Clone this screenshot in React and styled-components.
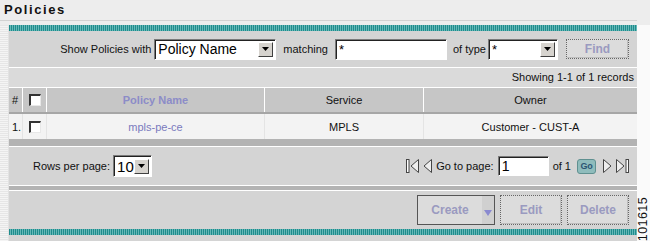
import React from "react";
import styled, { createGlobalStyle } from "styled-components";

const Global = createGlobalStyle`
  body {
    margin: 0;
    background: #f4f4f4;
    font-family: "Liberation Sans", Arial, sans-serif;
  }
`;

function Arrow() {
  return (
    <svg width="7" height="4" viewBox="0 0 7 4">
      <path d="M0 0h7L3.5 4z" fill="#000" />
    </svg>
  );
}

function PageIcon({ dir, bar }) {
  const left = dir === "left";
  const w = bar ? 13 : 9;
  return (
    <svg width={w} height="16" viewBox={`0 0 ${w} 16`}>
      {bar && left && <rect x="0.5" y="1.5" width="2.5" height="13" fill="#fff" stroke="#444" />}
      {left ? (
        <path d={bar ? "M12.5 1.5 L5 8 L12.5 14.5 Z" : "M8.5 1.5 L1 8 L8.5 14.5 Z"} fill="#eee" stroke="#444" />
      ) : (
        <path d="M0.5 1.5 L8 8 L0.5 14.5 Z" fill="#eee" stroke="#444" />
      )}
      {bar && !left && <rect x="10" y="1.5" width="2.5" height="13" fill="#fff" stroke="#444" />}
    </svg>
  );
}

export default function App() {
  return (
    <>
      <Global />
      <Page>
        <Title>Policies</Title>
        <Frame>
          <Edge />
          <Panel>
            <Teal />
            <FilterBar>
              <Label gap={3}>Show Policies with</Label>
              <Select width={122} gap={7}>
                <SelectValue size={14}>Policy Name</SelectValue>
                <SelectButton>
                  <Arrow />
                </SelectButton>
              </Select>
              <Label gap={7}>matching</Label>
              <TextInput width={112} gap={6}>*</TextInput>
              <Label gap={2}>of type</Label>
              <Select width={70} gap={8}>
                <SelectValue size={13}>*</SelectValue>
                <SelectButton>
                  <Arrow />
                </SelectButton>
              </Select>
              <DottedButton width={63} height={20}>
                Find
              </DottedButton>
            </FilterBar>
            <WhiteLine />
            <InfoRow>Showing 1-1 of 1 records</InfoRow>
            <WhiteLine />
            <Table>
              <HeaderRow>
                <HeadCell width={14} align="left">#</HeadCell>
                <HeadCell width={24}>
                  <Check />
                </HeadCell>
                <HeadCell width={218} link>
                  Policy Name
                </HeadCell>
                <HeadCell width={159}>Service</HeadCell>
                <HeadCell flex>Owner</HeadCell>
              </HeaderRow>
              <DataRow>
                <Cell width={14} align="left">1.</Cell>
                <Cell width={24}>
                  <Check />
                </Cell>
                <Cell width={218} link>
                  mpls-pe-ce
                </Cell>
                <Cell width={159}>MPLS</Cell>
                <Cell flex>Customer - CUST-A</Cell>
              </DataRow>
            </Table>
            <Band height={7} />
            <WhiteLine />
            <PagerRow>
              <RowsPer>
                <Label gap={3}>Rows per page:</Label>
                <Select width={39} height={22}>
                  <SelectValue size={15}>10</SelectValue>
                  <SelectButton>
                    <Arrow />
                  </SelectButton>
                </Select>
              </RowsPer>
              <Pager>
                <PageIcon dir="left" bar />
                <PageIcon dir="left" />
                <Label>Go to page:</Label>
                <TextInput width={51} height={20} size={14}>
                  1
                </TextInput>
                <Label>of 1</Label>
                <GoButton>Go</GoButton>
                <PageIcon dir="right" />
                <PageIcon dir="right" bar />
              </Pager>
            </PagerRow>
            <WhiteLine />
            <Band height={4} />
            <WhiteLine />
            <ButtonRow>
              <CreateButton>
                <CreateLabel>Create</CreateLabel>
                <CreateArrow>
                  <svg width="8" height="6" viewBox="0 0 8 6">
                    <path d="M0 0h8L4 6z" fill="#8a8ad0" />
                  </svg>
                </CreateArrow>
              </CreateButton>
              <DottedButton width={62} height={30}>
                Edit
              </DottedButton>
              <DottedButton width={62} height={30}>
                Delete
              </DottedButton>
            </ButtonRow>
            <Teal />
          </Panel>
          <Gutter>
            <FigId>101615</FigId>
          </Gutter>
        </Frame>
      </Page>
    </>
  );
}

const Page = styled.div`
  width: 650px;
  height: 241px;
  overflow: hidden;
  display: flex;
  flex-direction: column;
  background: #ededed;
`;

const Title = styled.div`
  height: 20px;
  padding-left: 4px;
  font-size: 13px;
  font-weight: 700;
  letter-spacing: 1.6px;
  line-height: 19px;
  color: #111;
  border-bottom: 1px solid #d2d2d2;
  margin-right: 13px;
`;

const Frame = styled.div`
  flex: 1;
  display: flex;
  padding-top: 4px;
`;

const Edge = styled.div`
  width: 8px;
  background: repeating-linear-gradient(180deg, #e6e6e6 0 1px, #f4f4f4 1px 2px);
  border-right: 1px solid #e2e2e2;
`;

const Panel = styled.div`
  width: 628px;
  display: flex;
  flex-direction: column;
  background: #d4d4d4;
`;

const Teal = styled.div`
  height: 6px;
  background: repeating-linear-gradient(90deg, #1f8c8c 0 1px, #66b8b8 1px 2px);
`;

const FilterBar = styled.div`
  height: 36px;
  display: flex;
  align-items: center;
  justify-content: flex-end;
  padding-right: 8px;
`;

const Label = styled.span`
  font-size: 11px;
  color: #111;
  white-space: nowrap;
  margin-right: ${(p) => (p.gap !== undefined ? p.gap : 0)}px;
`;

const Select = styled.div`
  width: ${(p) => p.width}px;
  height: ${(p) => p.height || 21}px;
  margin-right: ${(p) => p.gap || 0}px;
  box-sizing: border-box;
  display: flex;
  align-items: center;
  background: #fff;
  border-top: 1px solid #7a7a7a;
  border-left: 1px solid #7a7a7a;
  border-right: 1px solid #fff;
  border-bottom: 1px solid #fff;
  box-shadow: inset 1px 1px 0 #222;
  padding: 2px 2px 2px 3px;
`;

const SelectValue = styled.span`
  flex: 1;
  font-size: ${(p) => p.size}px;
  line-height: 15px;
  color: #000;
  white-space: nowrap;
  overflow: hidden;
`;

const SelectButton = styled.span`
  width: 15px;
  height: 15px;
  box-sizing: border-box;
  display: flex;
  align-items: center;
  justify-content: center;
  background: #d6d3ce;
  border-top: 1px solid #fff;
  border-left: 1px solid #fff;
  border-right: 1px solid #404040;
  border-bottom: 1px solid #404040;
`;

const TextInput = styled.div`
  width: ${(p) => p.width}px;
  height: ${(p) => p.height || 21}px;
  margin-right: ${(p) => p.gap || 0}px;
  box-sizing: border-box;
  background: #fff;
  border-top: 1px solid #7a7a7a;
  border-left: 1px solid #7a7a7a;
  border-right: 1px solid #fff;
  border-bottom: 1px solid #fff;
  box-shadow: inset 1px 1px 0 #222;
  padding: 1px 3px;
  font-size: ${(p) => p.size || 13}px;
  line-height: 17px;
  color: #000;
`;

const DottedButton = styled.div`
  width: ${(p) => p.width}px;
  height: ${(p) => p.height}px;
  box-sizing: border-box;
  display: flex;
  align-items: center;
  justify-content: center;
  background: #dcdcdc;
  border: 1px dotted #666;
  box-shadow: inset -1px -1px 0 #bdbdbd;
  font-size: 12px;
  font-weight: 700;
  color: #9a9ac0;
`;

const WhiteLine = styled.div`
  height: 1px;
  background: #fff;
`;

const InfoRow = styled.div`
  height: 19px;
  line-height: 19px;
  text-align: right;
  padding-right: 3px;
  font-size: 11px;
  color: #111;
  background: #dadada;
`;

const Table = styled.div`
  display: flex;
  flex-direction: column;
`;

const HeaderRow = styled.div`
  height: 24px;
  display: flex;
  background: #c6c6c6;
  border-bottom: 2px solid #a6a6a6;
`;

const HeadCell = styled.div`
  ${(p) => (p.flex ? "flex: 1;" : `width: ${p.width}px;`)}
  display: flex;
  align-items: center;
  justify-content: ${(p) => (p.align === "left" ? "flex-start" : "center")};
  padding-left: ${(p) => (p.align === "left" ? "3px" : "0")};
  box-sizing: border-box;
  border-right: ${(p) => (p.flex ? "none" : "1px solid #fff")};
  font-size: 11px;
  font-weight: ${(p) => (p.link ? 700 : 400)};
  color: ${(p) => (p.link ? "#8c8cc8" : "#111")};
`;

const DataRow = styled.div`
  height: 25px;
  display: flex;
  background: #f3f3f3;
`;

const Cell = styled.div`
  ${(p) => (p.flex ? "flex: 1;" : `width: ${p.width}px;`)}
  display: flex;
  align-items: center;
  justify-content: ${(p) => (p.align === "left" ? "flex-start" : "center")};
  padding-left: ${(p) => (p.align === "left" ? "3px" : "0")};
  box-sizing: border-box;
  border-right: ${(p) => (p.flex ? "none" : "1px solid #e4e4e4")};
  font-size: 11px;
  color: ${(p) => (p.link ? "#7a7abe" : "#111")};
`;

const Check = styled.span`
  width: 12px;
  height: 12px;
  box-sizing: border-box;
  background: #fff;
  border-top: 2px solid #333;
  border-left: 2px solid #333;
  border-right: 1px solid #e8e8e8;
  border-bottom: 1px solid #e8e8e8;
`;

const Band = styled.div`
  height: ${(p) => p.height}px;
  background: #b3b3b3;
`;

const PagerRow = styled.div`
  height: 38px;
  display: flex;
  align-items: center;
  justify-content: space-between;
  padding: 0 8px 0 24px;
`;

const RowsPer = styled.div`
  display: flex;
  align-items: center;
`;

const Pager = styled.div`
  display: flex;
  align-items: center;
  gap: 4px;
`;

const GoButton = styled.span`
  width: 17px;
  height: 13px;
  display: flex;
  align-items: center;
  justify-content: center;
  border-radius: 3px;
  background: #8fbcbc;
  border: 1px solid #5f9090;
  font-size: 9px;
  font-weight: 700;
  letter-spacing: -0.3px;
  color: #2b5573;
  margin: 0 3px 0 2px;
`;

const ButtonRow = styled.div`
  height: 38px;
  display: flex;
  align-items: center;
  justify-content: flex-end;
  gap: 5px;
  padding-right: 8px;
`;

const CreateButton = styled.div`
  width: 78px;
  height: 30px;
  box-sizing: border-box;
  display: flex;
  background: #dcdcdc;
  border: 1px solid #555;
`;

const CreateLabel = styled.span`
  flex: 1;
  display: flex;
  align-items: center;
  justify-content: center;
  font-size: 12px;
  font-weight: 700;
  color: #9a9ac0;
`;

const CreateArrow = styled.span`
  width: 12px;
  display: flex;
  align-items: flex-end;
  justify-content: center;
  padding-bottom: 8px;
  background: #d0d0d0;
`;

const Gutter = styled.div`
  flex: 1;
  position: relative;
  background: #fafafa;
`;

const FigId = styled.span`
  position: absolute;
  right: 0;
  bottom: 0;
  writing-mode: vertical-rl;
  transform: rotate(180deg);
  font-size: 12.5px;
  line-height: 13px;
  color: #111;
  letter-spacing: 0.4px;
`;
